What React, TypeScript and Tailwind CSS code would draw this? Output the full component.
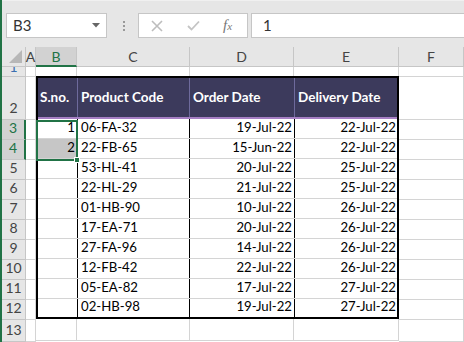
import React from "react";

const rows = [
  [1, "06-FA-32", "19-Jul-22", "22-Jul-22"],
  [2, "22-FB-65", "15-Jun-22", "22-Jul-22"],
  ["", "53-HL-41", "20-Jul-22", "25-Jul-22"],
  ["", "22-HL-29", "21-Jul-22", "25-Jul-22"],
  ["", "01-HB-90", "10-Jul-22", "26-Jul-22"],
  ["", "17-EA-71", "20-Jul-22", "26-Jul-22"],
  ["", "27-FA-96", "14-Jul-22", "26-Jul-22"],
  ["", "12-FB-42", "22-Jul-22", "26-Jul-22"],
  ["", "05-EA-82", "17-Jul-22", "27-Jul-22"],
  ["", "02-HB-98", "19-Jul-22", "27-Jul-22"],
];

function RowHead({ n, h, selected }: { n: number; h: string; selected?: boolean }) {
  return (
    <div className={`flex ${h}`}>
      <div
        className={
          selected
            ? "w-[24px] flex items-end justify-center pb-[1px] bg-[#d2d2d2] text-[#217346] border-b border-[#c6c6c6] border-r-2 border-r-[#217346]"
            : "w-[24px] flex items-end justify-center pb-[1px] bg-[#e6e6e6] text-[#444] border-b border-r border-[#c6c6c6]"
        }
      >
        {n}
      </div>
      <div className="w-[10px] bg-white border-b border-r border-[#d4d4d4]" />
    </div>
  );
}

export default function App() {
  return (
    <div className="relative w-[464px] h-[342px] overflow-hidden bg-[#e6e6e6] border-l-2 border-[#217346] font-['Lato',sans-serif] text-[13.5px] text-black">
      {/* formula bar */}
      <div className="flex items-start h-[47px] pt-[12px] border-t border-[#f0f0f0]">
        <div className="ml-[4px] w-[101px] h-[25px] bg-white border border-[#c6c6c6] flex items-center pl-[6px] pr-[6px] text-[15px] text-[#333] shrink-0">
          <span className="flex-1">B3</span>
          <svg width="8" height="5" viewBox="0 0 8 5">
            <polygon points="0,0 8,0 4,4.5" fill="#666" />
          </svg>
        </div>
        <div className="w-[31px] h-[25px] flex flex-col items-center justify-center gap-[2px] pl-[2px] shrink-0">
          <span className="w-[2px] h-[2px] bg-[#999]" />
          <span className="w-[2px] h-[2px] bg-[#999]" />
          <span className="w-[2px] h-[2px] bg-[#999]" />
        </div>
        <div className="w-[110px] h-[25px] bg-white border border-[#c6c6c6] flex items-center shrink-0">
          <svg className="ml-[12px]" width="12" height="12" viewBox="0 0 12 12">
            <path d="M1 1 L11 11 M11 1 L1 11" stroke="#bdbdbd" strokeWidth="1.6" />
          </svg>
          <svg className="ml-[24px]" width="13" height="11" viewBox="0 0 13 11">
            <path d="M1 6 L4.5 9.5 L12 1.5" stroke="#c4c4c4" strokeWidth="1.8" fill="none" />
          </svg>
          <span className="ml-[23px] font-['Liberation_Serif',serif] italic text-[15px] text-[#777]">
            f<span className="text-[11px]">x</span>
          </span>
        </div>
        <div className="ml-[3px] w-[230px] h-[25px] bg-white border border-[#c6c6c6] flex items-center pl-[11px] text-[15px] text-[#333] shrink-0">
          1
        </div>
      </div>

      {/* column headers */}
      <div className="flex h-[20px] text-[#444] text-[14px]">
        <div className="w-[24px] bg-[#e6e6e6] border-r border-b border-[#c6c6c6] flex items-end justify-end pr-[3px] pb-[3px]">
          <svg width="13" height="13" viewBox="0 0 13 13">
            <polygon points="13,0 13,13 0,13" fill="#b7b7b7" />
          </svg>
        </div>
        <div className="w-[10px] border-r border-b border-[#c6c6c6] flex items-center justify-center">A</div>
        <div className="w-[41px] bg-[#d2d2d2] text-[#217346] border-r border-[#c6c6c6] border-b-2 border-b-[#217346] flex items-center justify-center">
          B
        </div>
        <div className="w-[113px] border-r border-b border-[#c6c6c6] flex items-center justify-center">C</div>
        <div className="w-[104px] border-r border-b border-[#c6c6c6] flex items-center justify-center">D</div>
        <div className="w-[105px] border-r border-b border-[#c6c6c6] flex items-center justify-center">E</div>
        <div className="w-[65px] border-r border-b border-[#c6c6c6] flex items-center justify-center">F</div>
      </div>

      {/* row 1 (mostly hidden) */}
      <div className="flex h-[10px] bg-white">
        <div className="w-[24px] bg-[#e6e6e6] border-r border-b border-[#c6c6c6] overflow-hidden flex justify-center text-[#3a6fb0] text-[14px]">
          <span className="-mt-[10px] leading-[20px]">1</span>
        </div>
        <div className="w-[10px] border-r border-b border-[#d4d4d4]" />
        <div className="w-[41px] border-r border-b border-[#d4d4d4]" />
        <div className="w-[113px] border-r border-b border-[#d4d4d4]" />
        <div className="w-[104px] border-r border-b border-[#d4d4d4]" />
        <div className="w-[105px] border-r border-b border-[#d4d4d4]" />
        <div className="w-[65px] border-r border-b border-[#d4d4d4]" />
      </div>

      {/* body */}
      <div className="flex bg-white">
        <div className="flex flex-col text-[14px]">
          <RowHead n={2} h="h-[43px]" />
          {rows.map((_, i) => (
            <RowHead key={i} n={i + 3} h="h-[20px]" selected={i < 2} />
          ))}
          <RowHead n={13} h="h-[22px]" />
        </div>

        <div className="flex flex-col">
          <div className="w-[363px] border-2 border-black -mt-[1px]">
            <div className="flex h-[41px] bg-[#3c3a5c] text-white font-bold border-b-2 border-[#a67fc4]">
              <div className="w-[40px] border-r border-[#6e6a9c] flex items-center pl-[2px]">S.no.</div>
              <div className="w-[112px] border-r border-[#6e6a9c] flex items-center pl-[3px]">Product Code</div>
              <div className="w-[105px] border-r border-[#6e6a9c] flex items-center pl-[3px]">Order Date</div>
              <div className="w-[102px] flex items-center pl-[3px]">Delivery Date</div>
            </div>
            {rows.map((r, i) => (
              <div
                key={i}
                className={i < rows.length - 1 ? "flex h-[20px] border-b border-[#d4d4d4] text-[13.2px]" : "flex h-[18px] text-[13.2px]"}
              >
                <div className={i === 1 ? "w-[40px] border-r border-black bg-[#c6c6c6] flex items-end justify-end pr-[2px]" : "w-[40px] border-r border-black flex items-end justify-end pr-[2px]"}>
                  {r[0]}
                </div>
                <div className="w-[112px] border-r border-black flex items-end pl-[3px]">{r[1]}</div>
                <div className="w-[105px] border-r border-black flex items-end justify-end pr-[2px]">{r[2]}</div>
                <div className="w-[102px] flex items-end justify-end pr-[1px]">{r[3]}</div>
              </div>
            ))}
          </div>
          <div className="flex h-[22px]">
            <div className="w-[41px] border-r border-b border-[#d4d4d4]" />
            <div className="w-[113px] border-r border-b border-[#d4d4d4]" />
            <div className="w-[104px] border-r border-b border-[#d4d4d4]" />
            <div className="w-[105px] border-r border-b border-[#d4d4d4]" />
          </div>
        </div>

        <div className="flex flex-col">
          <div className="w-[65px] h-[43px] border-r border-b border-[#d4d4d4]" />
          {rows.map((_, i) => (
            <div key={i} className="w-[65px] h-[20px] border-r border-b border-[#d4d4d4]" />
          ))}
          <div className="w-[65px] h-[22px] border-r border-b border-[#d4d4d4]" />
        </div>
      </div>

      {/* selection B3:B4 */}
      <div className="absolute left-[34px] top-[120px] w-[42px] h-[41px] border-2 border-[#217346] pointer-events-none">
        <div className="absolute -right-[4px] -bottom-[4px] w-[6px] h-[6px] bg-[#217346] border border-white" />
      </div>
    </div>
  );
}
